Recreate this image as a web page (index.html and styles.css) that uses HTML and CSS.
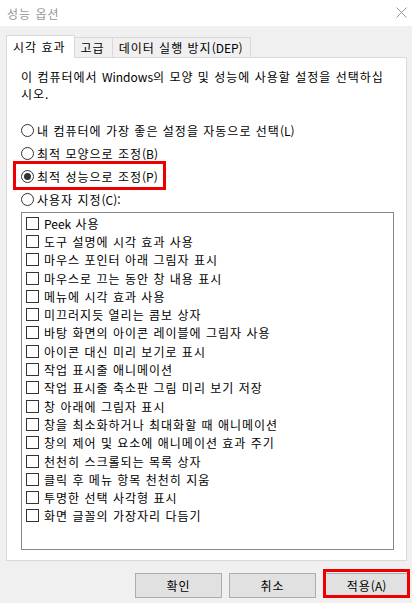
FILE: index.html
```html
<!DOCTYPE html>
<html lang="ko">
<head>
    <meta charset="UTF-8">
    <title>성능 옵션</title>
    <link rel="stylesheet" href="styles.css">
</head>
<body>
<div class="window">
    <div class="titlebar">
        <span class="title">성능 옵션</span>
        <svg class="close" width="11" height="11" viewBox="0 0 11 11">
            <path d="M0.5 0.5 L10.5 10.5 M10.5 0.5 L0.5 10.5" stroke="#999" stroke-width="1" fill="none"/>
        </svg>
    </div>

    <div class="body">
        <div class="tabs">
            <div class="tab selected">시각 효과</div>
            <div class="tab">고급</div>
            <div class="tab">데이터 실행 방지<span class="latin">(DEP)</span></div>
        </div>

        <div class="tab-panel">
            <p class="intro">이 컴퓨터에서 <span class="latin">Windows</span>의 모양 및 성능에 사용할 설정을 선택하십<br>시오.</p>

            <div class="radio-group">
                <div class="radio-row"><span class="radio"></span>내 컴퓨터에 가장 좋은 설정을 자동으로 선택<span class="latin">(L)</span></div>
                <div class="radio-row"><span class="radio"></span>최적 모양으로 조정<span class="latin">(B)</span></div>
                <div class="radio-row highlight"><span class="radio checked"></span>최적 성능으로 조정<span class="latin">(P)</span></div>
                <div class="radio-row"><span class="radio"></span>사용자 지정<span class="latin">(C):</span></div>
            </div>

            <div class="listbox">
                <div class="check-row"><span class="checkbox"></span><span class="latin">Peek</span>&nbsp;사용</div>
                <div class="check-row"><span class="checkbox"></span>도구 설명에 시각 효과 사용</div>
                <div class="check-row"><span class="checkbox"></span>마우스 포인터 아래 그림자 표시</div>
                <div class="check-row"><span class="checkbox"></span>마우스로 끄는 동안 창 내용 표시</div>
                <div class="check-row"><span class="checkbox"></span>메뉴에 시각 효과 사용</div>
                <div class="check-row"><span class="checkbox"></span>미끄러지듯 열리는 콤보 상자</div>
                <div class="check-row"><span class="checkbox"></span>바탕 화면의 아이콘 레이블에 그림자 사용</div>
                <div class="check-row"><span class="checkbox"></span>아이콘 대신 미리 보기로 표시</div>
                <div class="check-row"><span class="checkbox"></span>작업 표시줄 애니메이션</div>
                <div class="check-row"><span class="checkbox"></span>작업 표시줄 축소판 그림 미리 보기 저장</div>
                <div class="check-row"><span class="checkbox"></span>창 아래에 그림자 표시</div>
                <div class="check-row"><span class="checkbox"></span>창을 최소화하거나 최대화할 때 애니메이션</div>
                <div class="check-row"><span class="checkbox"></span>창의 제어 및 요소에 애니메이션 효과 주기</div>
                <div class="check-row"><span class="checkbox"></span>천천히 스크롤되는 목록 상자</div>
                <div class="check-row"><span class="checkbox"></span>클릭 후 메뉴 항목 천천히 지움</div>
                <div class="check-row"><span class="checkbox"></span>투명한 선택 사각형 표시</div>
                <div class="check-row"><span class="checkbox"></span>화면 글꼴의 가장자리 다듬기</div>
            </div>
        </div>

        <div class="buttons">
            <button class="btn">확인</button>
            <button class="btn">취소</button>
            <button class="btn highlight">적용<span class="latin">(A)</span></button>
        </div>
    </div>
</div>
</body>
</html>
```

FILE: styles.css
```css
html, body {
    margin: 0;
    padding: 0;
    width: 412px;
    height: 603px;
    overflow: hidden;
}

body {
    font-family: "Noto Sans CJK KR", "Noto Sans", sans-serif;
    font-size: 12px;
    color: #000;
    background: #f0f0f0;
}

.latin {
    letter-spacing: 0;
}

.window {
    display: flex;
    flex-direction: column;
    height: 603px;
}

.titlebar {
    height: 26px;
    background: #fff;
    display: flex;
    align-items: center;
    justify-content: space-between;
    padding: 0 5px 0 7px;
}

.title {
    color: #999;
    font-size: 12px;
    letter-spacing: 1px;
}

.close {
    margin-top: -2px;
}

.body {
    flex: 1;
    display: flex;
    flex-direction: column;
    padding: 8px 5px 0 6px;
}

.tabs {
    display: flex;
    align-items: flex-end;
    height: 23px;
    position: relative;
    z-index: 1;
}

.tab {
    height: 20px;
    box-sizing: border-box;
    padding: 0 7px 0 6px;
    border: 1px solid #d9d9d9;
    border-left: none;
    border-bottom: none;
    background: #f0f0f0;
    display: flex;
    align-items: center;
    letter-spacing: 1px;
}

.tab.selected {
    height: 23px;
    background: #fff;
    border-left: 1px solid #d9d9d9;
    padding: 0 8px 2px 6px;
    margin-bottom: -1px;
}

.tab-panel {
    height: 504px;
    box-sizing: border-box;
    background: #fff;
    border: 1px solid #d9d9d9;
    padding: 10px 12px 0 14px;
    display: flex;
    flex-direction: column;
}

.intro {
    margin: 0;
    line-height: 17px;
    letter-spacing: 1px;
}

.radio-group {
    margin-top: 17px;
    display: flex;
    flex-direction: column;
}

.radio-row {
    height: 23px;
    display: flex;
    align-items: center;
    width: fit-content;
    letter-spacing: 1px;
    position: relative;
}

.radio-row.highlight::after {
    content: "";
    position: absolute;
    left: -8px;
    right: -8px;
    top: -4px;
    bottom: -2px;
    border: 3px solid #ee0000;
}

.radio {
    width: 13px;
    height: 13px;
    box-sizing: border-box;
    border: 1px solid #333;
    border-radius: 50%;
    margin-right: 3px;
    display: flex;
    align-items: center;
    justify-content: center;
}

.radio.checked::before {
    content: "";
    width: 7px;
    height: 7px;
    border-radius: 50%;
    background: #333;
}

.listbox {
    margin-top: 1px;
    height: 338px;
    box-sizing: border-box;
    border: 1px solid #828790;
    padding: 1px 0 0 4px;
    display: flex;
    flex-direction: column;
}

.check-row {
    height: 18.3px;
    display: flex;
    align-items: center;
    letter-spacing: 1px;
    white-space: nowrap;
}

.checkbox {
    width: 13px;
    height: 13px;
    box-sizing: border-box;
    border: 1px solid #333;
    margin-right: 5px;
    flex: none;
}

.buttons {
    display: flex;
    justify-content: flex-end;
    gap: 7px;
    margin-top: 12px;
    margin-right: -3px;
}

.btn {
    width: 87px;
    height: 25px;
    background: #e1e1e1;
    border: 1px solid #adadad;
    font-family: inherit;
    font-size: 12px;
    letter-spacing: 1px;
    color: #000;
    padding: 0;
    position: relative;
}

.btn.highlight::after {
    content: "";
    position: absolute;
    left: -1px;
    right: -1px;
    top: -5px;
    bottom: -1px;
    border: 3px solid #ee0000;
}
```
